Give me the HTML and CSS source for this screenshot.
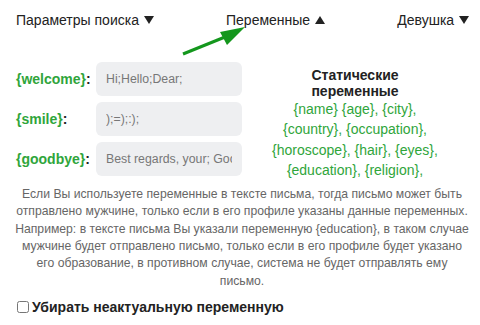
FILE: index.html
```html
<!doctype html>
<html lang="ru">
<head>
<meta charset="utf-8">
<title>Переменные</title>
<link rel="stylesheet" href="styles.css">
</head>
<body>

	<div class="tabs">
		<span class="tab">Параметры поиска <i class="down"></i></span>
		<span class="tab">Переменные <i class="up"></i></span>
		<span class="tab">Девушка <i class="down"></i></span>
	</div>

	<svg class="arrow" width="80" height="40" viewBox="0 0 80 40">
		<line x1="3" y1="34" x2="45" y2="17" stroke="#14971d" stroke-width="3" />
		<polygon points="65,7 40,12 47,25" fill="#14971d" />
	</svg>

	<div class="vars">

		<div class="fields">
			<div class="row"><label><b>{welcome}</b>:</label><input class="box" value="Hi;Hello;Dear;"></div>
			<div class="row"><label><b>{smile}</b>:</label><input class="box" value=");=);:);"></div>
			<div class="row"><label><b>{goodbye}</b>:</label><input class="box" value="Best regards, your; Good bye"></div>
		</div>

		<div class="static">
			<h3>Статические переменные</h3>
			<p>{name} {age}, {city}, {country}, {occupation}, {horoscope}, {hair}, {eyes}, {education}, {religion},</p>
		</div>

	</div>

	<p class="note">
		Если Вы используете переменные в тексте письма, тогда письмо может быть<br>
		отправлено мужчине, только если в его профиле указаны данные переменных.<br>
		Например: в тексте письма Вы указали переменную {education}, в таком случае<br>
		мужчине будет отправлено письмо, только если в его профиле будет указано<br>
		его образование, в противном случае, система не будет отправлять ему<br>
		письмо.
	</p>

	<label class="check"><input type="checkbox"> Убирать неактуальную переменную</label>

</body>
</html>
```

FILE: styles.css
```css
body { font: 14px "Liberation Sans", Arial, sans-serif; color: #222; margin: 0; position: relative; }

.tabs { display: flex; justify-content: space-between; padding: 12px 11px 0 16px; }
.tab { white-space: nowrap; }
.down, .up { display: inline-block; border-left: 5.5px solid transparent; border-right: 5.5px solid transparent; margin-left: 1px; vertical-align: 1px; }
.down { border-top: 8px solid #222; }
.up { border-bottom: 8px solid #222; }

.arrow { position: absolute; left: 180px; top: 20px; }

.vars { display: flex; margin-top: 34px; }
.fields { display: flex; flex-direction: column; gap: 6px; padding-left: 16px; width: 226px; }
.row { display: flex; align-items: center; }
.row label { width: 80px; font-weight: bold; }
.row b { color: #2fa53b; }
.box { background: #eeeff1; border: none; border-radius: 6px; box-sizing: border-box; color: #777; font: 12.3px "Liberation Sans", Arial, sans-serif; height: 34px; padding: 0 10px; width: 146px; }

.static { text-align: center; width: 172px; margin-left: 27px; }
.static h3 { font-size: 14px; margin: 5px 0 0; line-height: 16px; }
.static p { color: #2fa53b; font-size: 14px; line-height: 20.3px; margin: 0; }

.note { color: #666; font-size: 12.2px; line-height: 17.3px; text-align: center; margin: 6px 6px 0 10px; white-space: nowrap; }

.check { display: flex; align-items: center; font-weight: bold; font-size: 14px; margin: 9px 0 0 17px; }
.check input { margin: 0 3px 0 0; width: 12px; height: 12px; }
```
